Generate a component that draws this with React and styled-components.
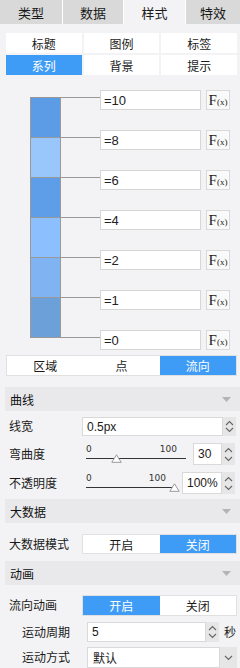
import React from 'react';
import styled, { createGlobalStyle } from 'styled-components';

const Global = createGlobalStyle`
  html, body { margin: 0; padding: 0; background: #f3f3f5; }
  body {
    font-family: "Noto Sans CJK SC", "Liberation Sans", sans-serif;
    font-size: 12px;
    color: #222;
  }
  * { box-sizing: border-box; }
`;

const BLUE = '#3f9cf6';

const Page = styled.div`
  width: 240px;
  height: 668px;
  overflow: hidden;
  background: #f3f3f5;
`;

const TabBar = styled.div`
  display: grid;
  grid-template-columns: 62px 60px 61px 1fr;
  column-gap: 1px;
  background: #fff;
  height: 24px;
`;

const Tab = styled.div`
  display: flex;
  align-items: center;
  justify-content: center;
  font-size: 13px;
  color: #1a1a1a;
  background: ${p => (p.$active ? '#f3f3f5' : '#d9d9d9')};
`;

const SubTabs = styled.div`
  display: grid;
  grid-template-columns: repeat(3, 1fr);
  gap: 2px 2px;
  width: 231px;
  margin: 9px 0 0 6px;
`;

const SubTab = styled.div`
  height: 20px;
  display: flex;
  align-items: center;
  justify-content: center;
  font-size: 12px;
  background: ${p => (p.$active ? BLUE : '#fff')};
  color: ${p => (p.$active ? '#fff' : '#1a1a1a')};
`;

const StopsArea = styled.div`
  display: flex;
  align-items: flex-start;
  margin: 15px 0 0 30px;
`;

const ColorBar = styled.div`
  width: 31px;
  height: 241px;
  margin-top: 7px;
  border: 1px solid #999;
  display: flex;
  flex-direction: column;
`;

const Segment = styled.div`
  flex: 1;
  background: ${p => p.$color};
  & + & { border-top: 1px solid #999; }
`;

const StopList = styled.div`
  display: flex;
  flex-direction: column;
  gap: 20px;
`;

const StopRow = styled.div`
  display: flex;
  align-items: flex-start;
  height: 20px;
`;

const Connector = styled.div`
  width: 39px;
  height: 1px;
  margin-top: 7px;
  background: #999;
`;

const StopInput = styled.div`
  width: 101px;
  height: 20px;
  background: #fff;
  border: 1px solid #d6d6d6;
  padding-left: 3px;
  display: flex;
  align-items: center;
  font-family: "Liberation Sans", Arial, sans-serif;
  font-size: 13px;
  color: #222;
`;

const FxButton = styled.div`
  width: 24px;
  height: 20px;
  margin-left: 5px;
  background: #fafafa;
  border: 1px solid #d9d9d9;
  display: flex;
  align-items: center;
  justify-content: center;
  font-family: "Liberation Serif", serif;
  color: #222;
  line-height: 1;
`;

const FxBig = styled.span`
  font-size: 15px;
`;

const FxSmall = styled.span`
  font-size: 9px;
  margin-top: 4px;
`;

const Segmented = styled.div`
  display: grid;
  grid-template-columns: repeat(${p => p.$count}, 1fr);
  width: ${p => p.$width}px;
  height: ${p => p.$h}px;
  margin: ${p => p.$margin || 0};
  background: #fff;
  border: 1px solid #e0e0e0;
`;

const SegItem = styled.div`
  display: flex;
  align-items: center;
  justify-content: center;
  font-size: 12px;
  background: ${p => (p.$active ? BLUE : 'transparent')};
  color: ${p => (p.$active ? '#fff' : '#1a1a1a')};
`;

const Header = styled.div`
  height: 24px;
  margin: ${p => p.$top}px 0 0 5px;
  background: #e9e9eb;
  display: flex;
  align-items: center;
  justify-content: space-between;
  padding: 0 9px 0 5px;
  font-size: 12px;
  color: #111;
`;

const Row = styled.div`
  display: flex;
  align-items: center;
  height: ${p => p.$h}px;
  margin-top: ${p => p.$top}px;
  padding-left: ${p => p.$indent}px;
  padding-right: ${p => p.$right ?? 3}px;
`;

const Label = styled.div`
  width: ${p => p.$w}px;
  flex-shrink: 0;
  font-size: 12px;
  color: #1a1a1a;
  margin-top: -2px;
`;

const Field = styled.div`
  display: flex;
  height: 100%;
  width: ${p => (p.$w ? `${p.$w}px` : 'auto')};
  flex: ${p => (p.$w ? '0 0 auto' : '1')};
`;

const TextBox = styled.div`
  flex: 1;
  background: #fff;
  border: 1px solid #d9d9d9;
  display: flex;
  align-items: center;
  padding-left: ${p => p.$pad ?? 4}px;
  font-family: ${p => (p.$cjk ? '"Noto Sans CJK SC", sans-serif' : '"Liberation Sans", Arial, sans-serif')};
  font-size: ${p => p.$fs || 12}px;
  color: #1a1a1a;
`;

const Spinner = styled.div`
  width: 13px;
  background: #e6e6e6;
  display: flex;
  flex-direction: column;
  align-items: center;
  justify-content: space-around;
  padding: 2px 0;
`;

const SelectArrow = styled.div`
  width: 17px;
  background: #e6e6e6;
  display: flex;
  align-items: center;
  justify-content: center;
`;

const Unit = styled.div`
  margin-left: 5px;
  font-size: 12px;
  margin-top: -2px;
`;

const SliderWrap = styled.div`
  flex: 1;
  height: 100%;
  margin: 0 7px 0 4px;
  position: relative;
`;

const SliderLabels = styled.div`
  display: flex;
  justify-content: space-between;
  padding-right: 9px;
  font-family: "DejaVu Sans", sans-serif;
  font-size: 9px;
  color: #333;
  line-height: 10px;
  margin-top: 1px;
`;

const Track = styled.div`
  position: relative;
  height: 1px;
  background: #333;
  margin-top: 4px;
`;

const Thumb = styled.svg`
  position: absolute;
  top: -4px;
  transform: translateX(-5px);
`;

const Chevron = ({ up }) => (
  <svg width="9" height="6" viewBox="0 0 9 6">
    <polyline
      points={up ? '1,5 4.5,1.5 8,5' : '1,1 4.5,4.5 8,1'}
      fill="none"
      stroke="#666"
      strokeWidth="1.1"
    />
  </svg>
);

const Caret = () => (
  <svg width="9" height="5" viewBox="0 0 9 5">
    <polygon points="0,0 9,0 4.5,5" fill="#b4b4b4" />
  </svg>
);

const NumberField = ({ value, w }) => (
  <Field $w={w}>
    <TextBox>{value}</TextBox>
    <Spinner>
      <Chevron up />
      <Chevron />
    </Spinner>
  </Field>
);

const Slider = ({ value }) => (
  <SliderWrap>
    <SliderLabels>
      <span>0</span>
      <span>100</span>
    </SliderLabels>
    <Track>
      <Thumb width="11" height="9" viewBox="0 0 11 9" style={{ left: `${value}%` }}>
        <polygon points="5.5,0.8 10.2,8.3 0.8,8.3" fill="#fff" stroke="#999" strokeWidth="1" />
      </Thumb>
    </Track>
  </SliderWrap>
);

const stops = ['=10', '=8', '=6', '=4', '=2', '=1', '=0'];
const colors = ['#5c9be6', '#9ac7fb', '#5e9ee8', '#8bbffd', '#80b3f1', '#6ba0d9'];

export default function App() {
  return (
    <Page>
      <Global />
      <TabBar>
        <Tab>类型</Tab>
        <Tab>数据</Tab>
        <Tab $active>样式</Tab>
        <Tab>特效</Tab>
      </TabBar>

      <SubTabs>
        <SubTab>标题</SubTab>
        <SubTab>图例</SubTab>
        <SubTab>标签</SubTab>
        <SubTab $active>系列</SubTab>
        <SubTab>背景</SubTab>
        <SubTab>提示</SubTab>
      </SubTabs>

      <StopsArea>
        <ColorBar>
          {colors.map((c, i) => (
            <Segment key={i} $color={c} />
          ))}
        </ColorBar>
        <StopList>
          {stops.map(s => (
            <StopRow key={s}>
              <Connector />
              <StopInput>{s}</StopInput>
              <FxButton>
                <FxBig>F</FxBig>
                <FxSmall>(x)</FxSmall>
              </FxButton>
            </StopRow>
          ))}
        </StopList>
      </StopsArea>

      <Segmented $count={3} $width={231} $h={21} $margin="5px 0 0 6px">
        <SegItem>区域</SegItem>
        <SegItem>点</SegItem>
        <SegItem $active>流向</SegItem>
      </Segmented>

      <Header $top={11}>
        <span>曲线</span>
        <Caret />
      </Header>
      <Row $h={19} $top={6} $indent={9} $right={4}>
        <Label $w={73}>线宽</Label>
        <NumberField value="0.5px" />
      </Row>
      <Row $h={22} $top={7} $indent={9} $right={5}>
        <Label $w={73}>弯曲度</Label>
        <Slider value={30} />
        <NumberField value="30" w={42} />
      </Row>
      <Row $h={22} $top={7} $indent={9} $right={5}>
        <Label $w={73}>不透明度</Label>
        <Slider value={99} />
        <NumberField value="100%" w={53} />
      </Row>

      <Header $top={5}>
        <span>大数据</span>
        <Caret />
      </Header>
      <Row $h={20} $top={11} $indent={9}>
        <Label $w={73}>大数据模式</Label>
        <Segmented $count={2} $width={155} $h={20}>
          <SegItem>开启</SegItem>
          <SegItem $active>关闭</SegItem>
        </Segmented>
      </Row>

      <Header $top={7}>
        <span>动画</span>
        <Caret />
      </Header>
      <Row $h={21} $top={10} $indent={9}>
        <Label $w={73}>流向动画</Label>
        <Segmented $count={2} $width={155} $h={21}>
          <SegItem $active>开启</SegItem>
          <SegItem>关闭</SegItem>
        </Segmented>
      </Row>
      <Row $h={20} $top={6} $indent={22}>
        <Label $w={65}>运动周期</Label>
        <NumberField value="5" w={132} />
        <Unit>秒</Unit>
      </Row>
      <Row $h={21} $top={5} $indent={22}>
        <Label $w={65}>运动方式</Label>
        <Field>
          <TextBox $cjk $pad={5}>默认</TextBox>
          <SelectArrow>
            <Chevron />
          </SelectArrow>
        </Field>
      </Row>
    </Page>
  );
}
